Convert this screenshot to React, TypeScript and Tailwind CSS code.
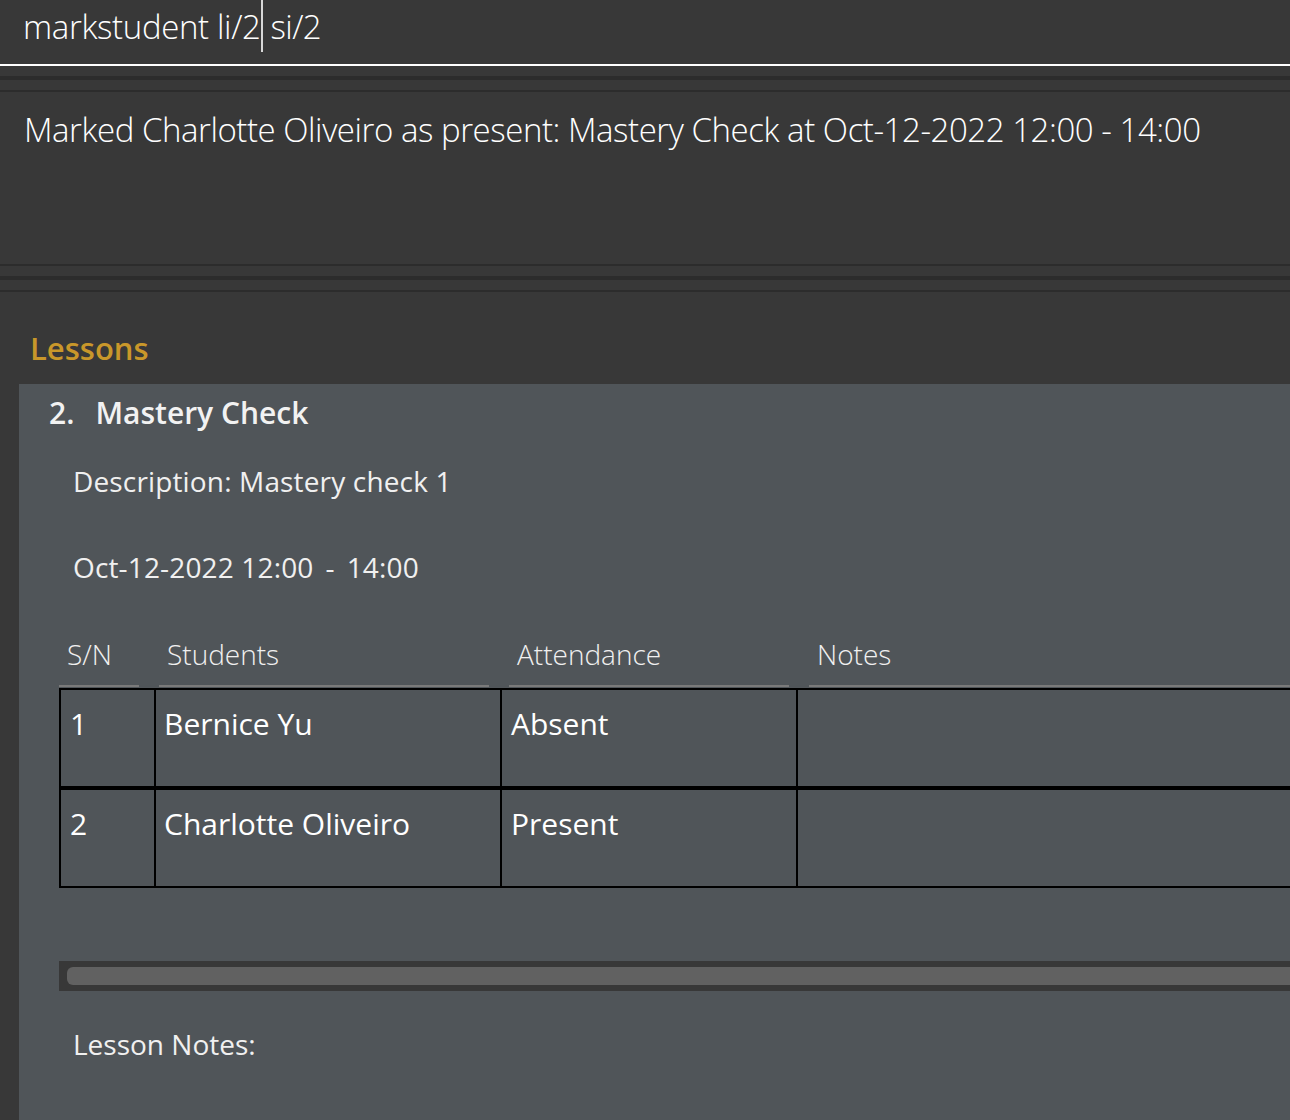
import React from "react";

const font = { fontFamily: '"Open Sans", "Noto Sans", sans-serif' };

export default function App() {
  return (
    <div className="w-[1290px] h-[1120px] overflow-hidden bg-[#383838] text-white" style={font}>
      {/* command box */}
      <div className="h-[64px] flex items-start pl-[23px]">
        <span className="text-[33px] font-light leading-[54px] tracking-[-0.35px]">markstudent li/2</span>
        <span className="w-[2px] h-[52px] bg-[#d8d8d8]" />
        <span className="text-[33px] font-light leading-[54px] tracking-[-0.6px] whitespace-pre"> si/2</span>
      </div>
      <div className="h-[2px] bg-white" />
      <div className="h-[10px]" />
      <div className="h-[4px] bg-[#2c2c2c]" />
      <div className="h-[10px]" />
      <div className="h-[2px] bg-[#2c2c2c]" />
      {/* result display */}
      <div className="h-[172px] pl-[24px] pt-[16px]">
        <div className="text-[33px] font-light leading-[44px] tracking-[-0.45px]">
          Marked Charlotte Oliveiro as present: Mastery Check at Oct-12-2022 12:00 - 14:00
        </div>
      </div>
      <div className="h-[2px] bg-[#2c2c2c]" />
      <div className="h-[10px]" />
      <div className="h-[4px] bg-[#2c2c2c]" />
      <div className="h-[10px]" />
      <div className="h-[2px] bg-[#2c2c2c]" />
      {/* lessons */}
      <div className="pl-[30px] pt-[36px] h-[92px]">
        <div className="text-[31px] font-semibold leading-[40px] text-[#c9972a]">Lessons</div>
      </div>
      <div className="ml-[19px] bg-[#505559] h-[800px]">
        <div className="pl-[30px] pt-[10px] h-[60px] flex text-[30px] font-semibold leading-[38px] text-[#f2f2f2]">
          <span>2.</span>
          <span className="ml-[21px]">Mastery Check</span>
        </div>
        <div className="pl-[54px] flex flex-col text-[28px] leading-[40px] text-[#f0f0f0] tracking-[0.15px]">
          <div className="h-[40px] mt-[17px]">Description: Mastery check 1</div>
          <div className="h-[40px] mt-[46px] flex">
            <span>Oct-12-2022 12:00</span>
            <span className="ml-[12px]">-</span>
            <span className="ml-[12px]">14:00</span>
          </div>
        </div>
        {/* table */}
        <div className="pl-[40px] mt-[48px]">
          <div className="flex h-[52px] text-[28px] font-light text-[#f0f0f0]">
            <div className="w-[80px] mr-[20px] border-b-2 border-[#7a7a7a] pl-[8px] leading-[38px]">S/N</div>
            <div className="w-[330px] mr-[20px] border-b-2 border-[#7a7a7a] pl-[8px] leading-[38px]">Students</div>
            <div className="w-[280px] mr-[20px] border-b-2 border-[#7a7a7a] pl-[8px] leading-[38px]">Attendance</div>
            <div className="flex-1 border-b-2 border-[#7a7a7a] pl-[8px] leading-[38px]">Notes</div>
          </div>
          <div className="h-[1px]" />
          {[
            ["1", "Bernice Yu", "Absent"],
            ["2", "Charlotte Oliveiro", "Present"],
          ].map((r, i) => (
            <div key={i} className="flex h-[100px] border-2 border-r-0 border-black text-[30px] leading-[40px] text-white">
              <div className="w-[95px] border-r-2 border-black pl-[9px] pt-[14px]">{r[0]}</div>
              <div className="w-[346px] border-r-2 border-black pl-[8px] pt-[14px]">{r[1]}</div>
              <div className="w-[296px] border-r-2 border-black pl-[9px] pt-[14px]">{r[2]}</div>
              <div className="flex-1" />
            </div>
          ))}
          <div className="h-[73px]" />
          <div className="h-[30px] bg-[#383838] pl-[8px] py-[6px]">
            <div className="h-full bg-[#616161] rounded-l-[6px]" />
          </div>
        </div>
        <div className="pl-[54px] mt-[33px] text-[28px] leading-[40px] text-[#f0f0f0]">Lesson Notes:</div>
      </div>
    </div>
  );
}
